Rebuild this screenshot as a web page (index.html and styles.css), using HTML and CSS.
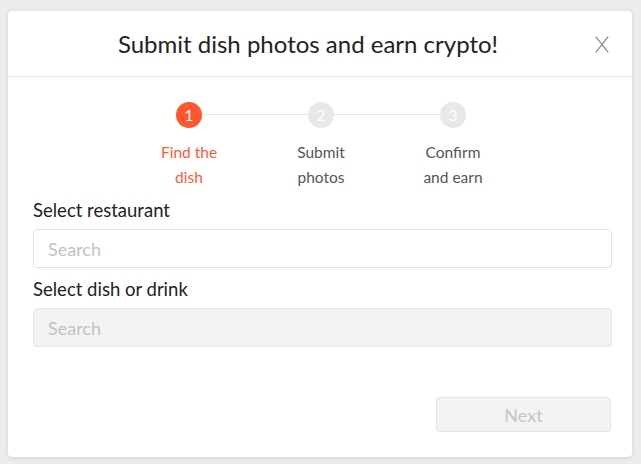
FILE: index.html
```html
<!DOCTYPE html>
<html>
<head>
<meta charset="utf-8">
<link rel="stylesheet" href="styles.css">
</head>
<body>
<div class="modal">
  <div class="modal-header">
    <h1 class="title">Submit dish photos and earn crypto!</h1>
    <button class="close" aria-label="Close">
      <svg width="14" height="17" viewBox="0 0 14 17"><path d="M0.8 0.6 L13.2 16.4 M13.2 0.6 L0.8 16.4" stroke="#8c8c8c" stroke-width="1.3" fill="none"/></svg>
    </button>
  </div>
  <div class="steps">
    <div class="step active">
      <div class="circle">1</div>
      <div class="label">Find the<br>dish</div>
    </div>
    <div class="step">
      <div class="circle">2</div>
      <div class="label">Submit<br>photos</div>
    </div>
    <div class="step last">
      <div class="circle">3</div>
      <div class="label">Confirm<br>and earn</div>
    </div>
  </div>
  <div class="form">
    <label class="field-label">Select restaurant</label>
    <input class="input" type="text" placeholder="Search">
    <label class="field-label">Select dish or drink</label>
    <input class="input disabled" type="text" placeholder="Search" disabled>
    <div class="actions">
      <button class="next" disabled>Next</button>
    </div>
  </div>
</div>
</body>
</html>
```

FILE: styles.css
```css
html, body {
  margin: 0;
  padding: 0;
}
body {
  background: #ececec;
  font-family: Lato, "Open Sans", sans-serif;
  width: 641px;
  height: 464px;
  overflow: hidden;
}
.modal {
  margin: 11px 0 0 8px;
  width: 624px;
  height: 446px;
  background: #fff;
  border-radius: 4px;
  box-shadow: 0 1px 4px rgba(0,0,0,0.12);
  box-sizing: border-box;
}
.modal-header {
  height: 66px;
  border-bottom: 1px solid #e6e6e6;
  box-sizing: border-box;
  display: flex;
  align-items: center;
  justify-content: center;
  position: relative;
}
.title {
  margin: 0;
  font-size: 24px;
  font-weight: 400;
  color: #222;
  padding-bottom: 1px;
  padding-right: 24px;
}
.close {
  position: absolute;
  right: 23px;
  top: 25px;
  background: none;
  border: 0;
  padding: 0;
  width: 14px;
  height: 17px;
  display: block;
}
.close svg { display: block; }
.steps {
  display: grid;
  grid-template-columns: 132px 132px 132px;
  justify-content: center;
  padding-top: 25px;
  margin-left: 2px;
}
.step {
  display: flex;
  flex-direction: column;
  align-items: center;
  position: relative;
}
.step::after {
  content: "";
  position: absolute;
  top: 12px;
  left: 50%;
  width: 132px;
  height: 1px;
  background: #e6e6e6;
}
.step.last::after { display: none; }
.circle {
  width: 26px;
  height: 26px;
  border-radius: 50%;
  background: #e8e8e8;
  color: #fff;
  font-size: 16px;
  line-height: 26px;
  text-align: center;
  position: relative;
  z-index: 1;
}
.step.active .circle {
  background: #ff5630;
}
.label {
  margin-top: 12px;
  font-size: 15.5px;
  line-height: 25px;
  color: #555;
  text-align: center;
}
.step.active .label {
  color: #ff5a36;
}
.form {
  padding: 9px 20px 0 25px;
  display: flex;
  flex-direction: column;
}
.field-label {
  font-size: 18.5px;
  line-height: 22px;
  color: #222;
  margin-bottom: 8px;
}
.input {
  height: 39px;
  box-sizing: border-box;
  border: 1px solid #e2e2e2;
  border-radius: 4px;
  padding: 0 14px;
  font-family: inherit;
  font-size: 18px;
  color: #333;
  background: #fff;
  margin-bottom: 10px;
  outline: none;
}
.input::placeholder { color: #c2c2c2; }
.input.disabled {
  background: #f3f3f3;
  border-color: #e6e6e6;
}
.actions {
  display: flex;
  justify-content: flex-end;
  margin-top: 40px;
  padding-right: 1px;
}
.next {
  width: 175px;
  height: 35px;
  box-sizing: border-box;
  background: #f3f3f3;
  border: 1px solid #e4e4e4;
  border-radius: 4px;
  font-family: inherit;
  font-size: 18px;
  color: #c6c6c6;
}
```
